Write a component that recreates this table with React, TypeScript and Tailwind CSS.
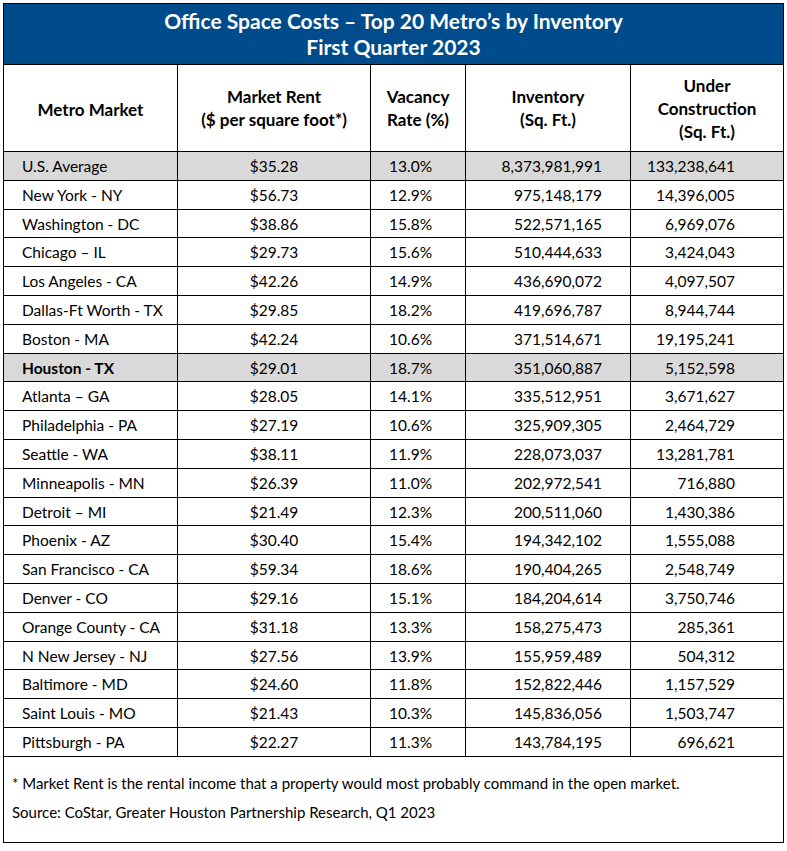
const rows: [string, string, string, string, string, boolean?][] = [
  ["U.S. Average", "$35.28", "13.0%", "8,373,981,991", "133,238,641", true],
  ["New York - NY", "$56.73", "12.9%", "975,148,179", "14,396,005"],
  ["Washington - DC", "$38.86", "15.8%", "522,571,165", "6,969,076"],
  ["Chicago \u2013 IL", "$29.73", "15.6%", "510,444,633", "3,424,043"],
  ["Los Angeles - CA", "$42.26", "14.9%", "436,690,072", "4,097,507"],
  ["Dallas-Ft Worth - TX", "$29.85", "18.2%", "419,696,787", "8,944,744"],
  ["Boston - MA", "$42.24", "10.6%", "371,514,671", "19,195,241"],
  ["Houston - TX", "$29.01", "18.7%", "351,060,887", "5,152,598", true],
  ["Atlanta \u2013 GA", "$28.05", "14.1%", "335,512,951", "3,671,627"],
  ["Philadelphia - PA", "$27.19", "10.6%", "325,909,305", "2,464,729"],
  ["Seattle - WA", "$38.11", "11.9%", "228,073,037", "13,281,781"],
  ["Minneapolis - MN", "$26.39", "11.0%", "202,972,541", "716,880"],
  ["Detroit \u2013 MI", "$21.49", "12.3%", "200,511,060", "1,430,386"],
  ["Phoenix - AZ", "$30.40", "15.4%", "194,342,102", "1,555,088"],
  ["San Francisco - CA", "$59.34", "18.6%", "190,404,265", "2,548,749"],
  ["Denver - CO", "$29.16", "15.1%", "184,204,614", "3,750,746"],
  ["Orange County - CA", "$31.18", "13.3%", "158,275,473", "285,361"],
  ["N New Jersey - NJ", "$27.56", "13.9%", "155,959,489", "504,312"],
  ["Baltimore - MD", "$24.60", "11.8%", "152,822,446", "1,157,529"],
  ["Saint Louis - MO", "$21.43", "10.3%", "145,836,056", "1,503,747"],
  ["Pittsburgh - PA", "$22.27", "11.3%", "143,784,195", "696,621"],
];

const cols = "grid grid-cols-[173px_193px_95px_165px_1fr]";

export default function App() {
  return (
    <div
      className="min-h-[851px] bg-white pt-[3px] pl-[3px] text-black"
      style={{ fontFamily: "Lato, 'Noto Sans', sans-serif" }}
    >
      <div className="w-[781px] border border-black">
        {/* Title band */}
        <div className="flex h-[60px] flex-col items-center justify-center bg-[#004b8c] text-[21px] font-bold leading-[26px] text-white">
          <div>Office Space Costs &ndash; Top 20 Metro&rsquo;s by Inventory</div>
          <div>First Quarter 2023</div>
        </div>

        {/* Column headings */}
        <div className={`${cols} h-[87px] border-t border-black text-[17px] font-bold leading-[23px]`}>
          <div className="flex items-center justify-center pt-[2px]">Metro Market</div>
          <div className="flex flex-col items-center justify-center border-l border-black">
            <div>Market Rent</div>
            <div>($ per square foot*)</div>
          </div>
          <div className="flex flex-col items-center justify-center border-l border-black">
            <div>Vacancy</div>
            <div>Rate (%)</div>
          </div>
          <div className="flex flex-col items-center justify-center border-l border-black">
            <div>Inventory</div>
            <div>(Sq. Ft.)</div>
          </div>
          <div className="flex flex-col items-center justify-center border-l border-black">
            <div>Under</div>
            <div>Construction</div>
            <div>(Sq. Ft.)</div>
          </div>
        </div>

        {/* Data rows */}
        {rows.map(([metro, rent, vac, inv, uc, shaded], i) => (
          <div
            key={metro}
            className={`${cols} h-[28.8px] border-t border-black text-[15.5px] leading-[28px] ${
              shaded ? "bg-[#d9d9d9]" : "bg-white"
            }`}
          >
            <div className={`pl-[18px] ${i === 7 ? "font-bold" : ""}`}>{metro}</div>
            <div className="border-l border-black text-center">{rent}</div>
            <div className="border-l border-black pl-[18px]">{vac}</div>
            <div className="border-l border-black pr-[28px] text-right">{inv}</div>
            <div className="border-l border-black pr-[48px] text-right">{uc}</div>
          </div>
        ))}

        {/* Footnote */}
        <div className="h-[86px] border-t border-black pl-[8px] pt-[12px] text-[15px] leading-[29px]">
          <div>* Market Rent is the rental income that a property would most probably command in the open market.</div>
          <div>Source: CoStar, Greater Houston Partnership Research, Q1 2023</div>
        </div>
      </div>
    </div>
  );
}
